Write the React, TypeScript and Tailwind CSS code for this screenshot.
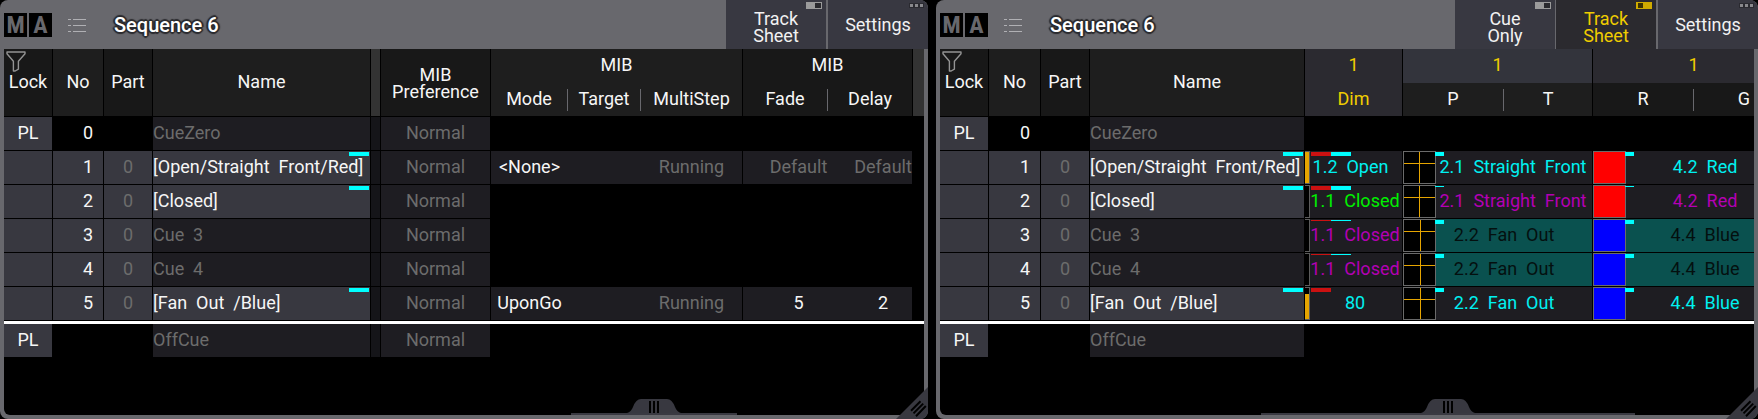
// src/App.tsx
import React from "react";

type Cue = {
  no: string;
  part?: string;
  name: string;
  lock?: string;
  named?: boolean;
};

type MibValues = {
  mode: string;
  multiStep: string;
  fade: string;
  delay: string;
  isDefault?: boolean;
};

type TrackValues = {
  dim: string;
  dimColor: string;
  level: number;
  dimFade?: string;
  dimDelay?: string;
  position: string;
  color: string;
  swatch: string;
  valueColor: string;
  valueBg: string;
  marker: string;
  panCenter: number;
};

const cues: Cue[] = [
  { no: "0", name: "CueZero", lock: "PL" },
  { no: "1", part: "0", name: "[Open/Straight  Front/Red]", named: true },
  { no: "2", part: "0", name: "[Closed]", named: true },
  { no: "3", part: "0", name: "Cue  3" },
  { no: "4", part: "0", name: "Cue  4" },
  { no: "5", part: "0", name: "[Fan  Out  /Blue]", named: true },
];

const offCue: Cue = { no: "", name: "OffCue", lock: "PL" };

const mibValues: Record<string, MibValues> = {
  "1": {
    mode: "<None>",
    multiStep: "Running",
    fade: "Default",
    delay: "Default",
    isDefault: true,
  },
  "5": { mode: "UponGo", multiStep: "Running", fade: "5", delay: "2" },
};

const trackValues: Record<string, TrackValues> = {
  "1": {
    dim: "1.2  Open  ",
    dimColor: "text-[#00f0f0]",
    level: 100,
    dimFade: "h-1",
    dimDelay: "h-1",
    position: "2.1  Straight  Front",
    color: "4.2  Red  ",
    swatch: "bg-[#ff0000]",
    valueColor: "text-[#00f0f0]",
    valueBg: "bg-[#1e1d22]",
    marker: "h-1",
    panCenter: 16,
  },
  "2": {
    dim: "1.1  Closed",
    dimColor: "text-[#00f000]",
    level: 0,
    dimFade: "h-1",
    dimDelay: "h-1",
    position: "2.1  Straight  Front",
    color: "4.2  Red  ",
    swatch: "bg-[#ff0000]",
    valueColor: "text-[#b400b4]",
    valueBg: "bg-[#1e1d22]",
    marker: "h-px",
    panCenter: 16,
  },
  "3": {
    dim: "1.1  Closed",
    dimColor: "text-[#b400b4]",
    level: 0,
    dimFade: "h-px",
    dimDelay: "h-px",
    position: "2.2  Fan  Out    ",
    color: "4.4  Blue  ",
    swatch: "bg-[#0000ff]",
    valueColor: "text-[#04100f]",
    valueBg: "bg-[#0a514f]",
    marker: "h-1",
    panCenter: 17,
  },
  "4": {
    dim: "1.1  Closed",
    dimColor: "text-[#b400b4]",
    level: 0,
    dimFade: "h-px",
    dimDelay: "h-px",
    position: "2.2  Fan  Out    ",
    color: "4.4  Blue  ",
    swatch: "bg-[#0000ff]",
    valueColor: "text-[#04100f]",
    valueBg: "bg-[#0a514f]",
    marker: "h-1",
    panCenter: 17,
  },
  "5": {
    dim: "80",
    dimColor: "text-[#00f0f0]",
    level: 80,
    dimFade: "h-1",
    position: "2.2  Fan  Out    ",
    color: "4.4  Blue  ",
    swatch: "bg-[#0000ff]",
    valueColor: "text-[#00f0f0]",
    valueBg: "bg-[#1e1d22]",
    marker: "h-1",
    panCenter: 17,
  },
};

/* ---------- Title bar ---------- */

const Logo: React.FC = () => (
  <div className="flex gap-0.5 text-2xl/6 font-bold text-[#68686d] font-['Liberation_Sans_Narrow','Roboto_Condensed',sans-serif]">
    <span className="w-[23px] h-6 bg-black text-center">M</span>
    <span className="w-[23px] h-6 bg-black text-center">A</span>
  </div>
);

const ListIcon: React.FC = () => (
  <svg width="18" height="16" viewBox="0 0 18 16" stroke="#b0b0b4" fill="none">
    <path d="M0 2.5h3M5 2.5h13M0 8.5h3M5 8.5h13M0 14.5h3M5 14.5h13" />
  </svg>
);

const FilterIcon: React.FC = () => (
  <svg
    width="20"
    height="21"
    viewBox="0 0 20 21"
    fill="none"
    stroke="#939393"
    strokeWidth="1.4"
    strokeLinejoin="round"
  >
    <path d="M1 1H19V2.8L12.4 10.2V18.2L9.2 20H7.4V10.2L1 2.8Z" />
  </svg>
);

const ToggleMark: React.FC<{ active?: boolean }> = ({ active }) => (
  <svg
    width="16"
    height="7"
    viewBox="0 0 16 7"
    className="absolute top-0.5 right-1"
  >
    <rect width="16" height="7" fill={active ? "#d0ab00" : "#9b9b9b"} />
    <rect
      x={active ? 2 : 9}
      y="1"
      width={active ? 5 : 6}
      height="5"
      fill={active ? "#3c3200" : "#2a2a2e"}
    />
  </svg>
);

const MoreDots: React.FC = () => (
  <svg
    width="15"
    height="5"
    viewBox="0 0 15 5"
    className="absolute top-[3px] right-1"
  >
    <rect width="15" height="5" fill="#2a2a30" />
    <path d="M1 1h3v3h-3zM6 1h3v3h-3zM11 1h3v3h-3z" fill="#88888c" />
  </svg>
);

const ToggleButton: React.FC<{
  top: string;
  bottom: string;
  active?: boolean;
}> = ({ top, bottom, active }) => (
  <button
    aria-pressed={!!active}
    className={`relative w-[100px] h-full pt-1 text-lg/[17px] ${
      active ? "bg-[#2b2a2f] text-[#f0cd00]" : "bg-[#383841] text-[#f2f2f2]"
    }`}
  >
    <ToggleMark active={active} />
    {top}
    <br />
    {bottom}
  </button>
);

const SettingsButton: React.FC = () => (
  <button className="relative w-[100px] h-full ml-0.5 rounded-tr-lg bg-[#383841] text-[#f2f2f2] text-lg/5">
    <MoreDots />
    Settings
  </button>
);

const TitleBar: React.FC<{ children: React.ReactNode }> = ({ children }) => (
  <header className="flex items-center h-[49px] pl-1">
    <Logo />
    <button className="ml-4" aria-label="Menu">
      <ListIcon />
    </button>
    <h2 className="ml-7 flex-1 text-xl/6 font-medium text-white whitespace-nowrap [text-shadow:1px_1px_1px_#2b2b2f,-1px_-1px_1px_#2b2b2f,1px_-1px_1px_#2b2b2f,-1px_1px_1px_#2b2b2f,0_2px_1px_#2b2b2f,2px_0_1px_#2b2b2f,-2px_0_1px_#2b2b2f,0_-2px_1px_#2b2b2f]">
      Sequence 6
    </h2>
    {children}
    <SettingsButton />
  </header>
);

/* ---------- Window frame ---------- */

const ScrollHandle: React.FC<{ className: string }> = ({ className }) => (
  <div
    className={`flex flex-col items-center border-b-2 border-[#3a3a42] ${className}`}
  >
    <svg width="54" height="14" viewBox="0 0 54 14">
      <path
        d="M0 14Q4 13 6 8Q9 0 14 0H40Q45 0 48 8Q50 13 54 14Z"
        fill="#383840"
      />
      <path d="M22 2h2v12h-2zM26 2h2v12h-2zM30 2h2v12h-2z" fill="#000" />
    </svg>
  </div>
);

const ResizeCorner: React.FC = () => (
  <svg
    width="32"
    height="32"
    viewBox="0 0 32 32"
    className="absolute right-0 bottom-0"
  >
    <path d="M32 0V32H0Z" fill="#383840" />
    <path
      d="M15 23.7L24.5 14.3M17.5 26.4L27.2 16.6M20 29.2L29.8 19"
      stroke="#000"
      strokeWidth="2"
    />
  </svg>
);

const SheetWindow: React.FC<{
  className: string;
  buttons: React.ReactNode;
  scroll: React.ReactNode;
  children: React.ReactNode;
}> = ({ className, buttons, scroll, children }) => (
  <section
    className={`relative flex flex-col min-w-0 rounded-lg overflow-hidden bg-[#68686d] ${className}`}
  >
    <TitleBar>{buttons}</TitleBar>
    <div className="flex flex-col flex-1 mx-1 mb-1 rounded-b-md overflow-hidden bg-black">
      {children}
      <div className="flex-1 min-h-10" />
      <div className="flex">{scroll}</div>
    </div>
    <ResizeCorner />
  </section>
);

/* ---------- Table pieces ---------- */

const headCell = "p-0 pb-px font-normal border-b border-r border-black";
const groupCell = "p-0 pb-0.5 font-normal border-r border-black";

const SubHead: React.FC<{
  label: string;
  className: string;
  divider?: boolean;
}> = ({ label, className, divider }) => (
  <th
    className={`p-0 font-normal border-b border-black ${className} ${
      divider ? "" : "border-r"
    }`}
  >
    <div
      className={`h-[22px] leading-5 ${
        divider ? "border-r border-r-[#68686d]" : ""
      }`}
    >
      {label}
    </div>
  </th>
);

const CueHeadCells: React.FC = () => (
  <>
    <th rowSpan={2} className={`${headCell} relative bg-[#181818]`}>
      <span className="absolute top-0.5 left-0.5">
        <FilterIcon />
      </span>
      Lock
    </th>
    <th rowSpan={2} className={`${headCell} bg-[#1e1e1e]`}>
      No
    </th>
    <th rowSpan={2} className={`${headCell} bg-[#181818]`}>
      Part
    </th>
    <th rowSpan={2} className={`${headCell} bg-[#1e1e1e]`}>
      Name
    </th>
  </>
);

const CueCells: React.FC<{ cue: Cue }> = ({ cue }) => {
  const bg = cue.part ? "bg-[#383840]" : "bg-black";
  return (
    <>
      <td className="p-0 pb-px border-b border-r border-black bg-[#383840] text-center">
        {cue.lock}
      </td>
      <td
        className={`p-0 pb-px pr-2.5 border-b border-r border-black text-right ${bg}`}
      >
        {cue.no}
      </td>
      <td
        className={`p-0 pb-px border-b border-r border-black text-center text-[#6c6c6c] ${bg}`}
      >
        {cue.part}
      </td>
      <td
        className={`relative p-0 pb-px border-b border-r border-black whitespace-pre ${
          cue.named ? "bg-[#383840]" : "bg-[#1e1d22] text-[#6c6c6c]"
        }`}
      >
        {cue.name}
        {cue.named && (
          <span className="absolute top-px right-px w-5 h-1 bg-[#00ffff]" />
        )}
      </td>
    </>
  );
};

/* ---------- Cue sheet with MIB columns ---------- */

const MibCells: React.FC<{ values?: MibValues }> = ({ values }) => {
  if (!values) return <td colSpan={6} className="p-0" />;
  const timing = values.isDefault ? "text-[#6c6c6c]" : "";
  return (
    <>
      <td className="p-0 pb-px border-b border-black bg-[#1e1d22] text-center">
        {values.mode}
      </td>
      <td className="p-0 border-b border-black bg-[#1e1d22]" />
      <td className="p-0 pb-px border-b border-r border-black bg-[#1e1d22] text-center text-[#6c6c6c]">
        {values.multiStep}
      </td>
      <td
        className={`p-0 pb-px pl-[26px] border-b border-black bg-[#1e1d22] text-center ${timing}`}
      >
        {values.fade}
      </td>
      <td
        className={`p-0 pb-px pl-[26px] border-b border-r border-black bg-[#1e1d22] text-center ${timing}`}
      >
        {values.delay}
      </td>
      <td className="p-0" />
    </>
  );
};

const MibRow: React.FC<{ cue: Cue }> = ({ cue }) => (
  <tr className="h-[34px]">
    <CueCells cue={cue} />
    <td className="p-0 border-b border-r border-black bg-[#151519]" />
    <td className="p-0 pb-px border-b border-r border-black bg-[#1e1d22] text-center text-[#6c6c6c]">
      Normal
    </td>
    <MibCells values={mibValues[cue.no]} />
  </tr>
);

const MibTable: React.FC = () => (
  <table className="w-full table-fixed border-separate border-spacing-0 text-lg/5 text-[#f6f6f6]">
    <colgroup>
      <col className="w-[49px]" />
      <col className="w-[51px]" />
      <col className="w-[49px]" />
      <col className="w-[218px]" />
      <col className="w-[10px]" />
      <col className="w-[110px]" />
      <col className="w-[77px]" />
      <col className="w-[73px]" />
      <col className="w-[102px]" />
      <col className="w-[85px]" />
      <col className="w-[85px]" />
      <col />
    </colgroup>
    <thead>
      <tr className="h-[34px]">
        <CueHeadCells />
        <th rowSpan={2} className={`${headCell} bg-[#333333]`} />
        <th
          rowSpan={2}
          className="p-0 font-normal leading-[17px] border-b border-r border-black bg-[#181818]"
        >
          MIB
          <br />
          Preference
        </th>
        <th colSpan={3} className={`${groupCell} bg-[#1e1e1e]`}>
          MIB
        </th>
        <th colSpan={2} className={`${groupCell} bg-[#181818]`}>
          MIB
        </th>
        <th rowSpan={2} className="p-0 border-b border-black bg-[#333333]" />
      </tr>
      <tr className="h-[34px]">
        <SubHead label="Mode" className="bg-[#1e1e1e]" divider />
        <SubHead label="Target" className="bg-[#1e1e1e]" divider />
        <SubHead label="MultiStep" className="bg-[#1e1e1e]" />
        <SubHead label="Fade" className="bg-[#181818]" divider />
        <SubHead label="Delay" className="bg-[#181818]" />
      </tr>
    </thead>
    <tbody>
      {cues.map((cue) => (
        <MibRow key={cue.no} cue={cue} />
      ))}
      <tr>
        <td colSpan={12} className="h-[3px] p-0 bg-white" />
      </tr>
      <MibRow cue={offCue} />
    </tbody>
  </table>
);

/* ---------- Track sheet ---------- */

const trackText = "flex-1 pr-0.5 text-center leading-8 whitespace-pre";

const DimCell: React.FC<{ track: TrackValues }> = ({ track }) => (
  <td className="relative p-0 border-b border-r border-black bg-[#1e1d22]">
    <div className="flex h-[33px]">
      <div className="flex items-end w-[5px] border border-l-0 border-[#5c5c5c] bg-black">
        <div
          className="w-full bg-[#e6a500]"
          style={{ height: `${track.level}%` }}
        />
      </div>
      <div className={`${trackText} ${track.dimColor}`}>{track.dim}</div>
    </div>
    <div className="absolute top-px left-1.5 flex">
      {track.dimFade && <span className={`w-5 bg-[#cc1111] ${track.dimFade}`} />}
      {track.dimDelay && (
        <span className={`w-5 bg-[#00ffff] ${track.dimDelay}`} />
      )}
    </div>
  </td>
);

const PositionCell: React.FC<{ track: TrackValues }> = ({ track }) => (
  <td
    colSpan={2}
    className={`relative p-0 border-b border-r border-black ${track.valueBg}`}
  >
    <div className="flex h-[33px]">
      <svg width="33" height="33" viewBox="0 0 33 33" className="shrink-0">
        <rect x="0.5" y="0.5" width="32" height="32" stroke="#6a6a6a" />
        <path
          d={`M${track.panCenter + 0.5} 1V32M1 12.5H32`}
          stroke="#e6a500"
        />
      </svg>
      <div className={`${trackText} ${track.valueColor}`}>{track.position}</div>
    </div>
    <span
      className={`absolute top-px left-8 w-[9px] bg-[#00ffff] ${track.marker}`}
    />
  </td>
);

const ColorCell: React.FC<{ track: TrackValues }> = ({ track }) => (
  <td
    colSpan={2}
    className={`relative p-0 border-b border-black ${track.valueBg}`}
  >
    <div className="flex h-[33px]">
      <div className={`w-[33px] border border-[#6a6a6a] ${track.swatch}`} />
      <div className={`${trackText} ${track.valueColor}`}>{track.color}</div>
    </div>
    <span
      className={`absolute top-px left-8 w-[9px] bg-[#00ffff] ${track.marker}`}
    />
  </td>
);

const TrackRow: React.FC<{ cue: Cue }> = ({ cue }) => {
  const track = trackValues[cue.no];
  return (
    <tr className="h-[34px]">
      <CueCells cue={cue} />
      {track ? (
        <>
          <DimCell track={track} />
          <PositionCell track={track} />
          <ColorCell track={track} />
        </>
      ) : (
        <td colSpan={5} className="p-0" />
      )}
    </tr>
  );
};

const TrackTable: React.FC = () => (
  <table className="w-[855px] table-fixed border-separate border-spacing-0 text-lg/5 text-[#f6f6f6]">
    <colgroup>
      <col className="w-[49px]" />
      <col className="w-[52px]" />
      <col className="w-[49px]" />
      <col className="w-[215px]" />
      <col className="w-[98px]" />
      <col className="w-[101px]" />
      <col className="w-[89px]" />
      <col className="w-[101px]" />
      <col className="w-[101px]" />
    </colgroup>
    <thead>
      <tr className="h-[34px]">
        <CueHeadCells />
        <th className={`${groupCell} bg-[#2b2a30] text-[#f0cd00]`}>1</th>
        <th colSpan={2} className={`${groupCell} bg-[#33343c] text-[#f0cd00]`}>
          1
        </th>
        <th colSpan={2} className={`${groupCell} bg-[#2b2a30] text-[#f0cd00]`}>
          1
        </th>
      </tr>
      <tr className="h-[34px]">
        <SubHead label="Dim" className="bg-[#2b2a30] text-[#f0cd00]" />
        <SubHead label="P" className="bg-[#1e1e1e]" divider />
        <SubHead label="T" className="bg-[#1e1e1e]" />
        <SubHead label="R" className="bg-[#181818]" divider />
        <SubHead label="G" className="bg-[#181818]" />
      </tr>
    </thead>
    <tbody>
      {cues.map((cue) => (
        <TrackRow key={cue.no} cue={cue} />
      ))}
      <tr>
        <td colSpan={9} className="h-[3px] p-0 bg-white" />
      </tr>
      <TrackRow cue={offCue} />
    </tbody>
  </table>
);

const App: React.FC = () => {
  return (
    <main className="flex gap-2 min-h-screen bg-black font-[Roboto,sans-serif]">
      <SheetWindow
        className="flex-[928]"
        buttons={<ToggleButton top="Track" bottom="Sheet" />}
        scroll={
          <>
            <div className="flex-[567]" />
            <ScrollHandle className="flex-[166]" />
            <div className="flex-[187]" />
          </>
        }
      >
        <MibTable />
      </SheetWindow>
      <SheetWindow
        className="flex-[822]"
        buttons={
          <div className="flex gap-px h-full">
            <ToggleButton top="Cue" bottom="Only" />
            <ToggleButton top="Track" bottom="Sheet" active />
          </div>
        }
        scroll={
          <>
            <div className="flex-[321]" />
            <ScrollHandle className="flex-[374]" />
            <div className="flex-[119]" />
          </>
        }
      >
        <TrackTable />
      </SheetWindow>
    </main>
  );
};

export default App;
